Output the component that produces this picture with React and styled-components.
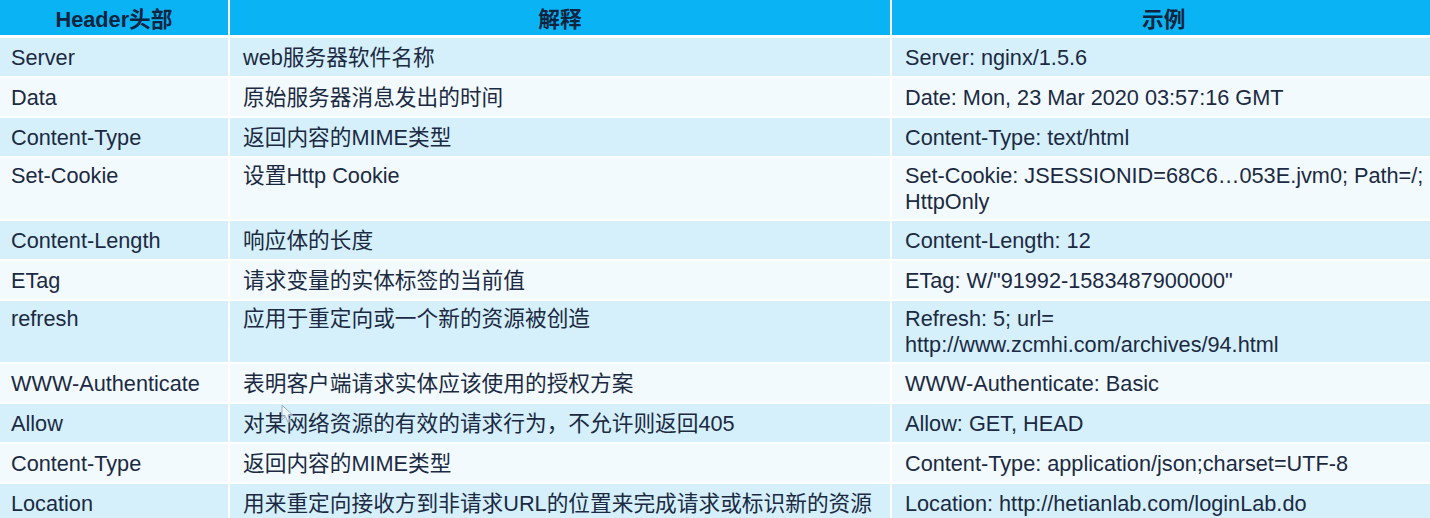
import React from "react";
import styled, { createGlobalStyle } from "styled-components";

const Global = createGlobalStyle`
  html, body { margin: 0; padding: 0; background: #ffffff; }
  body { font-family: "Liberation Sans", Arial, "Noto Sans CJK SC", sans-serif; }
`;

const Page = styled.div`
  position: relative;
  width: 1430px;
  height: 518px;
  overflow: hidden;
  background: #ffffff;
`;

const Grid = styled.div`
  display: grid;
  grid-template-columns: 228px 660px 1fr;
  column-gap: 2px;
  row-gap: 2px;
  background: #ffffff;
`;

const HeadCell = styled.div`
  height: 35px;
  margin-bottom: 1px;
  background: #0ab3f3;
  display: flex;
  align-items: center;
  justify-content: center;
  color: #0c2440;
  font-family: "Liberation Sans", Arial, "Noto Sans CJK SC", sans-serif;
  font-weight: 700;
  font-size: 21.7px;
`;

const Cell = styled.div`
  box-sizing: border-box;
  height: ${(p) => (p.$tall ? "61px" : "38px")};
  padding: ${(p) => (p.$tall ? "5px" : "1px")} 12px 0 ${(p) => (p.$first ? "11px" : "13px")};
  background: ${(p) => (p.$shade ? "#d5f0fb" : "#f3fafd")};
  display: flex;
  flex-direction: column;
  justify-content: ${(p) => (p.$tall ? "flex-start" : "center")};
  color: #1b2a42;
  font-family: "Liberation Sans", Arial, "Noto Sans CJK SC", sans-serif;
  font-size: 21.7px;
  line-height: 26px;
  white-space: nowrap;
`;

const Line = styled.span`
  display: block;
`;

const Cursor = styled.svg`
  position: absolute;
  left: 281px;
  top: 404px;
  width: 14px;
  height: 20px;
  pointer-events: none;
`;

const rows = [
  ["Server", ["web服务器软件名称"], ["Server: nginx/1.5.6"]],
  ["Data", ["原始服务器消息发出的时间"], ["Date: Mon, 23 Mar 2020 03:57:16 GMT"]],
  ["Content-Type", ["返回内容的MIME类型"], ["Content-Type: text/html"]],
  ["Set-Cookie", ["设置Http Cookie"], ["Set-Cookie: JSESSIONID=68C6…053E.jvm0; Path=/;", "HttpOnly"]],
  ["Content-Length", ["响应体的长度"], ["Content-Length: 12"]],
  ["ETag", ["请求变量的实体标签的当前值"], ["ETag: W/\"91992-1583487900000\""]],
  ["refresh", ["应用于重定向或一个新的资源被创造"], ["Refresh: 5; url=", "http://www.zcmhi.com/archives/94.html"]],
  ["WWW-Authenticate", ["表明客户端请求实体应该使用的授权方案"], ["WWW-Authenticate: Basic"]],
  ["Allow", ["对某网络资源的有效的请求行为，不允许则返回405"], ["Allow: GET, HEAD"]],
  ["Content-Type", ["返回内容的MIME类型"], ["Content-Type: application/json;charset=UTF-8"]],
  ["Location", ["用来重定向接收方到非请求URL的位置来完成请求或标识新的资源"], ["Location: http://hetianlab.com/loginLab.do"]],
];

export default function App() {
  return (
    <Page>
      <Global />
      <Grid>
        <HeadCell>Header头部</HeadCell>
        <HeadCell>解释</HeadCell>
        <HeadCell>示例</HeadCell>
        {rows.map(([name, desc, ex], i) => {
          const tall = ex.length > 1 || desc.length > 1;
          const shade = i % 2 === 0;
          return (
            <React.Fragment key={i}>
              <Cell $first $tall={tall} $shade={shade}>
                <Line>{name}</Line>
              </Cell>
              <Cell $tall={tall} $shade={shade}>
                {desc.map((d, k) => (
                  <Line key={k}>{d}</Line>
                ))}
              </Cell>
              <Cell $tall={tall} $shade={shade}>
                {ex.map((d, k) => (
                  <Line key={k}>{d}</Line>
                ))}
              </Cell>
            </React.Fragment>
          );
        })}
      </Grid>
      <Cursor viewBox="0 0 14 20">
        <path d="M1 1 L1 16 L4.5 12.5 L7 18.5 L9.5 17.5 L7 11.5 L12 11.5 Z" fill="rgba(255,255,255,0.55)" stroke="#9fb0c2" strokeWidth="1" />
      </Cursor>
    </Page>
  );
}
